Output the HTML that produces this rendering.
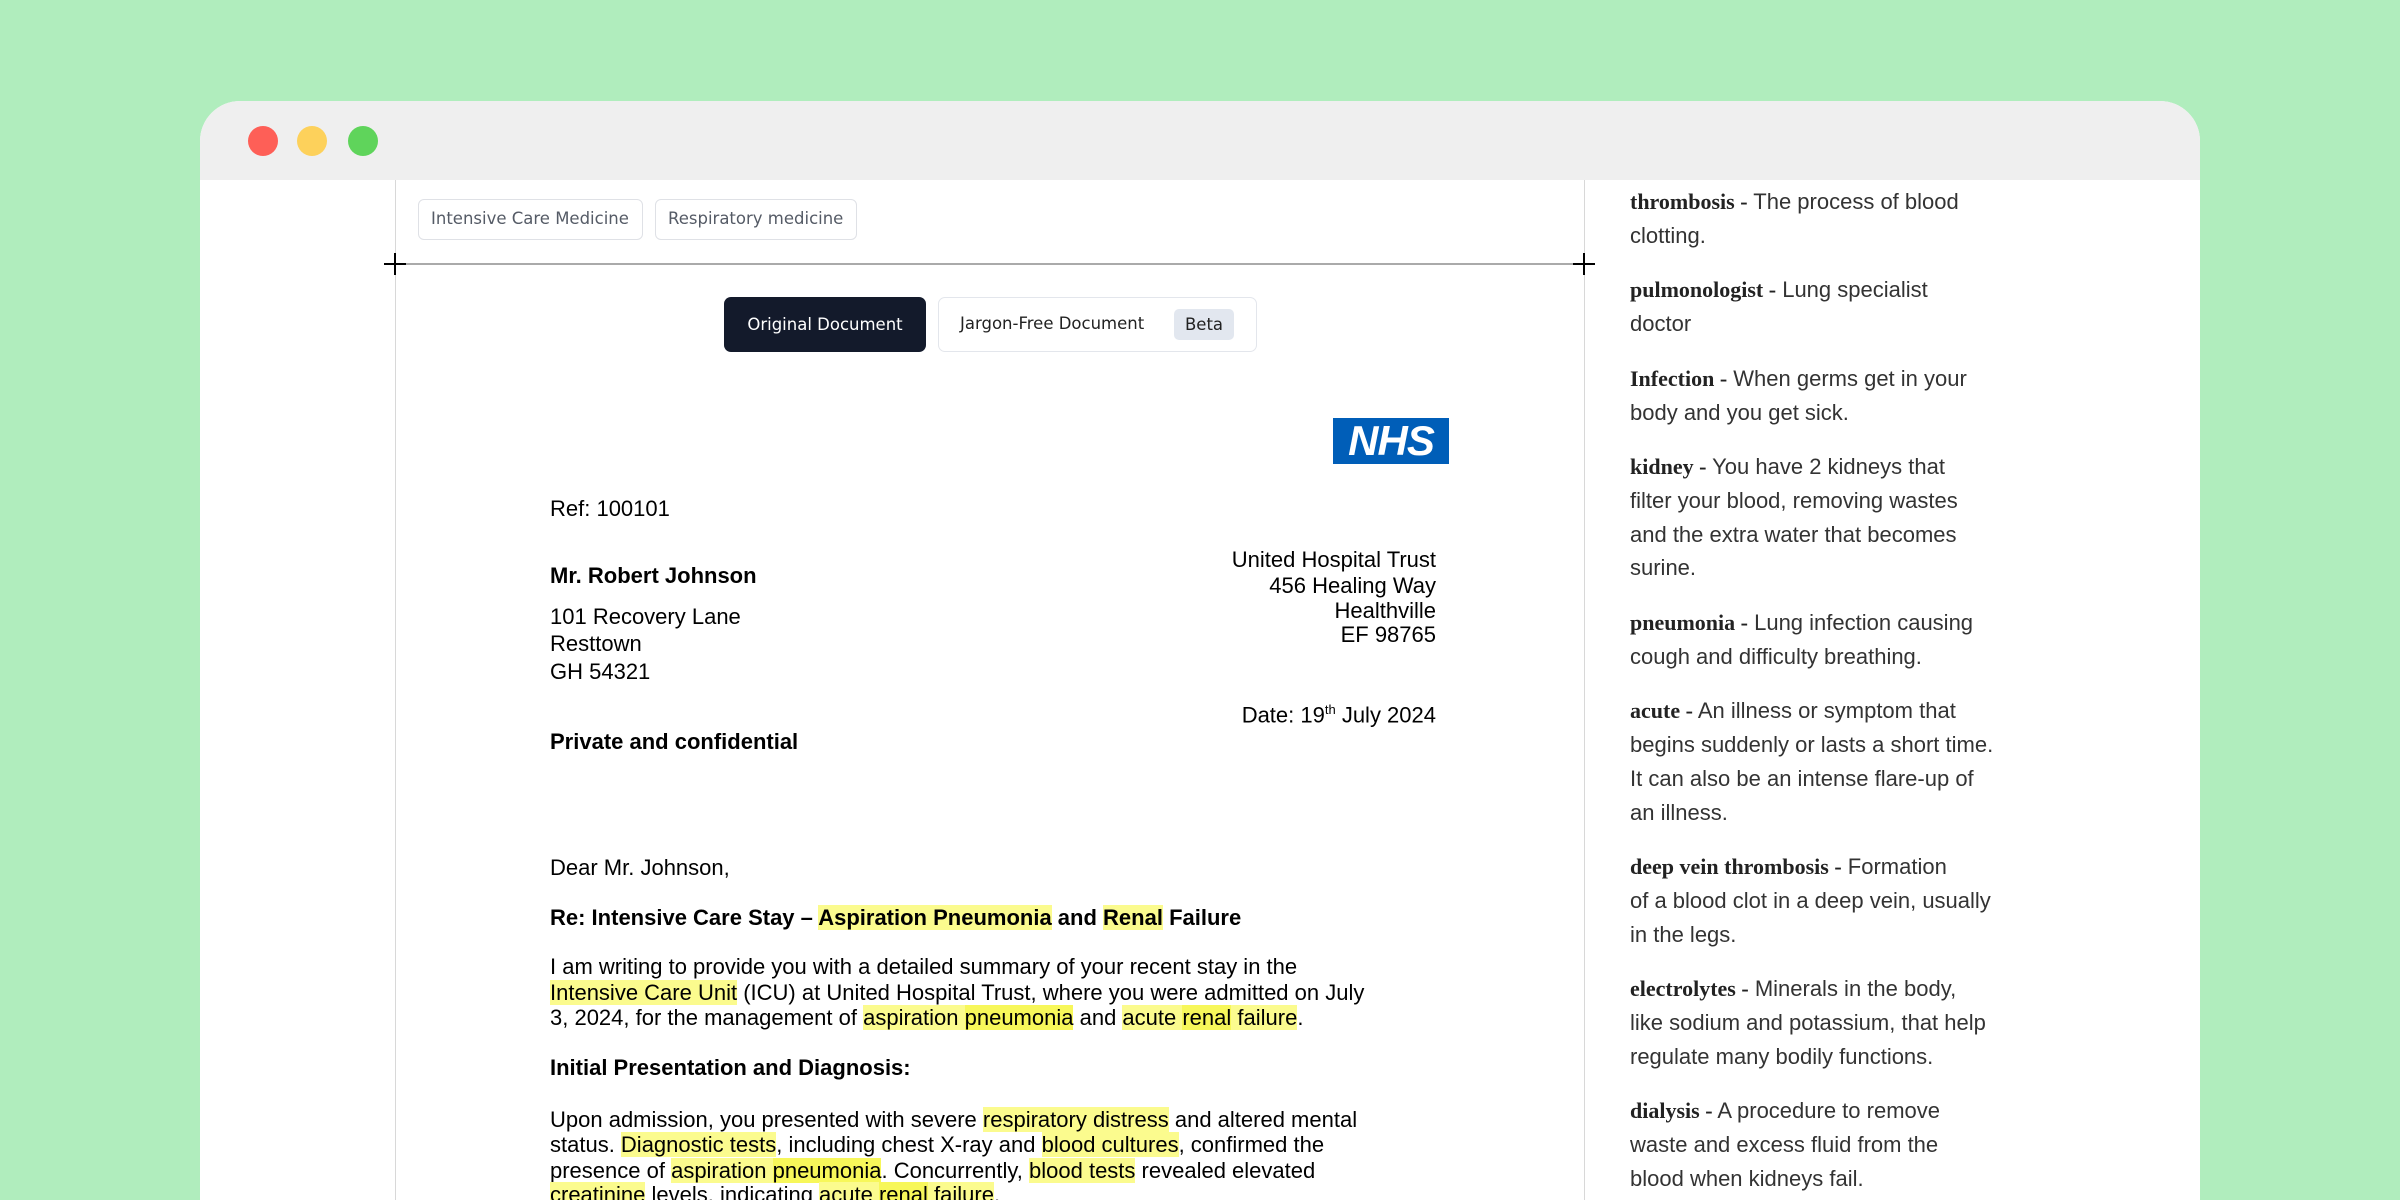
<!DOCTYPE html>
<html><head><meta charset="utf-8"><style>
*{margin:0;padding:0;box-sizing:border-box}
html,body{width:2400px;height:1200px;overflow:hidden}
body{background:#b0edbd;position:relative;font-family:"Liberation Sans",Arial,sans-serif}
.win{position:absolute;left:200px;top:101px;width:2000px;height:1099px;background:#fff;border-radius:40px 40px 0 0;overflow:hidden}
.bar{position:absolute;left:0;top:0;width:100%;height:79px;background:#efefef}
.dot{position:absolute;top:25px;width:30px;height:30px;border-radius:50%}
.abs{position:absolute;white-space:nowrap}
.tag{position:absolute;top:98px;height:41px;border:1.5px solid #dfe1e6;border-radius:6px;color:#555b66;line-height:38px;padding:0 12px;font-family:"DejaVu Sans","Liberation Sans",sans-serif;font-size:16.5px}
.L{position:absolute;left:350px;font-size:22px;color:#000;white-space:nowrap;line-height:26px}
.R{position:absolute;right:764px;font-size:22px;color:#000;white-space:nowrap;text-align:right;line-height:26px}
.h{background:#fbfb8e}
.hh{background:#f7f75a}
.side{position:absolute;left:1430px;top:84px;width:400px;font-size:22px;line-height:33.7px;color:#333;white-space:nowrap}
.side p{margin-bottom:21px}
.side b{font-family:"Liberation Serif",serif;font-weight:bold;color:#222;font-size:22px}
</style></head><body>
<div class="win">
<div class="bar">
<div class="dot" style="left:48px;background:#fe5f57"></div>
<div class="dot" style="left:97px;background:#fdd15b"></div>
<div class="dot" style="left:148px;background:#5fd45b"></div>
</div>
<div class="abs" style="left:195px;top:79px;width:1px;height:1200px;background:#d8d8d8"></div>
<div class="abs" style="left:1384px;top:79px;width:1px;height:1200px;background:#d8d8d8"></div>
<div class="abs" style="left:195px;top:162px;width:1189px;height:2px;background:#aaa"></div>
<div class="abs" style="left:184px;top:162px;width:22px;height:2px;background:#000"></div>
<div class="abs" style="left:194px;top:152px;width:2px;height:22px;background:#000"></div>
<div class="abs" style="left:1373px;top:162px;width:22px;height:2px;background:#000"></div>
<div class="abs" style="left:1383px;top:152px;width:2px;height:22px;background:#000"></div>
<div class="tag" style="left:218px;width:225px">Intensive Care Medicine</div>
<div class="tag" style="left:455px;width:202px">Respiratory medicine</div>
<div class="abs" style="left:524px;top:196px;width:202px;height:55px;background:#131a2b;border-radius:7px;color:#fff;font-family:'DejaVu Sans',sans-serif;font-size:16.5px;line-height:55px;text-align:center">Original Document</div>
<div class="abs" style="left:738px;top:196px;width:319px;height:55px;border:1.5px solid #e3e6ec;border-radius:7px;color:#222;font-family:'DejaVu Sans',sans-serif;font-size:16.5px;line-height:52px;padding-left:21px">Jargon-Free Document<span style="position:absolute;left:235px;top:11px;width:60px;height:31px;background:#e2e7ef;border-radius:5px;line-height:31px;text-align:center">Beta</span></div>
<div class="abs" style="left:1133px;top:317px;width:116px;height:46px;background:#005eb8;color:#fff;font-weight:bold;font-style:italic;font-size:42px;line-height:46px;text-align:center;letter-spacing:-1px">NHS</div>
<div class="L" style="top:395px">Ref: 100101</div>
<div class="L" style="top:462px;font-weight:bold">Mr. Robert Johnson</div>
<div class="L" style="top:503px">101 Recovery Lane</div>
<div class="L" style="top:530px">Resttown</div>
<div class="L" style="top:558px">GH 54321</div>
<div class="R" style="top:446px">United Hospital Trust</div>
<div class="R" style="top:472px">456 Healing Way</div>
<div class="R" style="top:497px">Healthville</div>
<div class="R" style="top:521px">EF 98765</div>
<div class="R" style="top:596px">Date: 19<sup style="font-size:13px">th</sup> July 2024</div>
<div class="L" style="top:628px;font-weight:bold">Private and confidential</div>
<div class="L" style="top:754px">Dear Mr. Johnson,</div>
<div class="L" style="top:804px;font-weight:bold">Re: Intensive Care Stay – <span class="h">Aspiration Pneumonia</span> and <span class="h">Renal</span> Failure</div>
<div class="L" style="top:853px">I am writing to provide you with a detailed summary of your recent stay in the</div>
<div class="L" style="top:879px"><span class="h">Intensive Care Unit</span> (ICU) at United Hospital Trust, where you were admitted on July</div>
<div class="L" style="top:904px">3, 2024, for the management of <span class="h">aspiration </span><span class="hh">pneumonia</span> and <span class="h">acute </span><span class="hh">renal</span><span class="h"> failure</span>.</div>
<div class="L" style="top:954px;font-weight:bold">Initial Presentation and Diagnosis:</div>
<div class="L" style="top:1006px">Upon admission, you presented with severe <span class="h">respiratory distress</span> and altered mental</div>
<div class="L" style="top:1031px">status. <span class="h">Diagnostic tests</span>, including chest X-ray and <span class="h">blood cultures</span>, confirmed the</div>
<div class="L" style="top:1057px">presence of <span class="h">aspiration </span><span class="hh">pneumonia</span>. Concurrently, <span class="h">blood tests</span> revealed elevated</div>
<div class="L" style="top:1081px"><span class="h">creatinine</span> levels, indicating <span class="h">acute </span><span class="hh">renal</span><span class="h"> failure</span>.</div>
<div class="side">
<p><b>thrombosis -</b> The process of blood<br>clotting.</p>
<p><b>pulmonologist -</b> Lung specialist<br>doctor</p>
<p><b>Infection -</b> When germs get in your<br>body and you get sick.</p>
<p><b>kidney -</b> You have 2 kidneys that<br>filter your blood, removing wastes<br>and the extra water that becomes<br>surine.</p>
<p><b>pneumonia -</b> Lung infection causing<br>cough and difficulty breathing.</p>
<p><b>acute -</b> An illness or symptom that<br>begins suddenly or lasts a short time.<br>It can also be an intense flare-up of<br>an illness.</p>
<p><b>deep vein thrombosis -</b> Formation<br>of a blood clot in a deep vein, usually<br>in the legs.</p>
<p><b>electrolytes -</b> Minerals in the body,<br>like sodium and potassium, that help<br>regulate many bodily functions.</p>
<p><b>dialysis -</b> A procedure to remove<br>waste and excess fluid from the<br>blood when kidneys fail.</p>
</div>
</div>
</body></html>
